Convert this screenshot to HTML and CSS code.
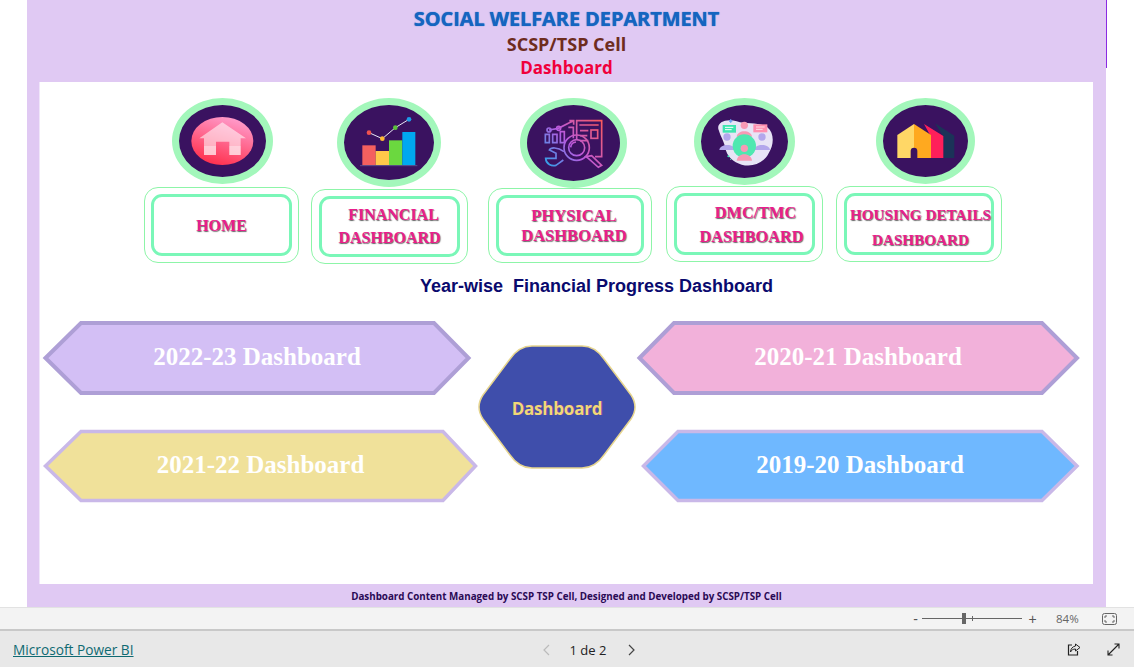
FILE: index.html
```html
<!DOCTYPE html>
<html lang="en">
<head>
    <meta charset="UTF-8">
    <meta name="viewport" content="width=device-width, initial-scale=1.0">
    <title>Social Welfare Department Dashboard</title>
    <link rel="stylesheet" href="styles.css">
</head>
<body>
    <div class="report">
        <header class="report-header">
            <div class="dept">SOCIAL WELFARE DEPARTMENT</div>
            <div class="cell">SCSP/TSP Cell</div>
            <div class="page-name">Dashboard</div>
        </header>

        <main class="canvas">
            <nav class="nav">
                <div class="nav-item nav-home">
                    <div class="icon">
                        <svg viewBox="117 45 261 216">
                            <defs>
                                <linearGradient id="homeGrad" x1="0.75" y1="0" x2="0.35" y2="1">
                                    <stop offset="0" stop-color="#ff9fd0"/>
                                    <stop offset="1" stop-color="#ff2f4c"/>
                                </linearGradient>
                            </defs>
                            <ellipse cx="247" cy="153" rx="93" ry="72" fill="url(#homeGrad)"/>
                            <path d="M247 97L318 145H302V195H268V155H228V195H192V145H178Z" fill="#fff" opacity="0.55"/>
                            <path d="M192 168H228V195H192ZM268 168H302V195H268Z" fill="#fff" opacity="0.35"/>
                        </svg>
                    </div>
                    <a class="nav-btn"><span class="nav-label">HOME</span></a>
                </div>
                <div class="nav-item nav-fin">
                    <div class="icon">
                        <svg viewBox="612 45 270 225">
                            <rect x="667" y="166" width="40" height="60" fill="#f4605f"/>
                            <rect x="707" y="183" width="40" height="43" fill="#ffc84a"/>
                            <rect x="747" y="151" width="40" height="75" fill="#6bd83f"/>
                            <rect x="787" y="126" width="39" height="100" fill="#00a8f0"/>
                            <path d="M660 227H832" stroke="#5a4f8c" stroke-width="3"/>
                            <path d="M687 128L727 146L766 113L807 88" fill="none" stroke="#e8e8f4" stroke-width="3"/>
                            <circle cx="687" cy="128" r="7" fill="#f0524f"/>
                            <circle cx="727" cy="146" r="7" fill="#ffb833"/>
                            <circle cx="766" cy="113" r="7" fill="#5cc23a"/>
                            <circle cx="807" cy="88" r="7" fill="#1c9be8"/>
                        </svg>
                    </div>
                    <a class="nav-btn"><span class="nav-label">&nbsp;&nbsp;FINANCIAL<br>DASHBOARD</span></a>
                </div>
                <div class="nav-item nav-phys">
                    <div class="icon">
                        <svg viewBox="141 45 279 228">
                            <defs>
                                <linearGradient id="physGrad" gradientUnits="userSpaceOnUse" x1="370" y1="90" x2="195" y2="232">
                                    <stop offset="0" stop-color="#ff5a55"/>
                                    <stop offset="0.55" stop-color="#b85ae0"/>
                                    <stop offset="1" stop-color="#25a8e8"/>
                                </linearGradient>
                            </defs>
                            <g fill="none" stroke="url(#physGrad)" stroke-width="5">
                                <path d="M207 120L235 115L268 98L280 93M268 92H281V104"/>
                                <circle cx="207" cy="120" r="6"/>
                                <circle cx="236" cy="115" r="6"/>
                                <path d="M196 133H208V158H196ZM218 133H231V158H218ZM241 125H253V158H241ZM265 112H280V145"/>
                                <path d="M290 150V92H365V200H345"/>
                                <path d="M298 105H356M300 122H325M300 137H322M300 152H325"/>
                                <rect x="333" y="120" width="20" height="25"/>
                                <circle cx="290" cy="173" r="38"/>
                                <circle cx="290" cy="173" r="24"/>
                                <path d="M272 172A18 18 0 0 1 288 156"/>
                                <path d="M318 200L335 197L365 226L355 232L325 205Z"/>
                                <path d="M252 185C232 170 212 172 208 180L228 190V205H197C198 222 215 230 228 226L250 210"/>
                            </g>
                        </svg>
                    </div>
                    <a class="nav-btn"><span class="nav-label">PHYSICAL<br>DASHBOARD</span></a>
                </div>
                <div class="nav-item nav-dmc">
                    <div class="icon">
                        <svg viewBox="663 45 261 219">
                            <path d="M716 120C708 100 735 84 770 94C800 104 840 96 862 112C884 130 882 165 866 190C850 222 815 232 785 224C760 216 740 200 735 170C730 150 722 140 716 120Z" fill="#e8e4f6"/>
                            <circle cx="741" cy="141" r="11" fill="#b3a7ec"/>
                            <path d="M718 180C720 160 764 160 766 180Z" fill="#b3a7ec"/>
                            <circle cx="846" cy="141" r="11" fill="#b3a7ec"/>
                            <path d="M822 180C824 160 868 160 870 180Z" fill="#b3a7ec"/>
                            <circle cx="793" cy="106" r="11" fill="#f79ab5"/>
                            <path d="M770 140C772 118 814 118 816 140Z" fill="#f79ab5"/>
                            <circle cx="793" cy="168" r="35" fill="#4fe8b0"/>
                            <circle cx="793" cy="175" r="11" fill="#f79ab5"/>
                            <path d="M770 212C772 186 814 186 816 212Z" fill="#f79ab5"/>
                            <rect x="728" y="105" width="40" height="23" fill="#3fe6b0"/>
                            <path d="M735 112H760M735 119H755" stroke="#fff" stroke-width="3"/>
                            <rect x="820" y="103" width="42" height="24" fill="#ff8fb0"/>
                            <path d="M828 111H854M828 118H848" stroke="#ffe0e8" stroke-width="3"/>
                            <path d="M752 88V98M747 93H757" stroke="#6a9cf0" stroke-width="4"/>
                            <circle cx="745" cy="199" r="3" fill="#3fe6b0"/>
                            <circle cx="752" cy="208" r="2" fill="#3fe6b0"/>
                        </svg>
                    </div>
                    <a class="nav-btn"><span class="nav-label">&nbsp;&nbsp;DMC/TMC<br>DASHBOARD</span></a>
                </div>
                <div class="nav-item nav-housing">
                    <div class="icon">
                        <svg viewBox="189 45 255 216">
                            <path d="M345 100L403 137V204H370V140Z" fill="#1b3358"/>
                            <path d="M312 102L370 138V204H330V135Z" fill="#ff1f5a"/>
                            <path d="M232 135L282 102V204H232Z" fill="#ffd766"/>
                            <path d="M282 102L333 135V204H282Z" fill="#ffa91f"/>
                            <path d="M272 204V183A10 10 0 0 1 292 183V204Z" fill="#3a1260"/>
                        </svg>
                    </div>
                    <a class="nav-btn"><span class="nav-label">HOUSING DETAILS<br>DASHBOARD</span></a>
                </div>
            </nav>

            <h2 class="section-title">Year-wise  Financial Progress Dashboard</h2>

            <section class="years">
                <a class="arrow arrow-2223">
                    <svg viewBox="0 0 428 74"><polygon points="2.500,37 38,2 391,2 425.500,37 391,72 38,72"/></svg>
                    <span>2022-23 Dashboard</span>
                </a>
                <a class="hex">
                    <svg viewBox="0 0 158 124"><path d="M5 50L32 14Q41 1 54 1H104Q117 1 126 14L153 50Q161 62 153 74L126 110Q117 123 104 123H54Q41 123 32 110L5 74Q-3 62 5 50Z"/></svg>
                    <span>Dashboard</span>
                </a>
                <a class="arrow arrow-2021">
                    <svg viewBox="0 0 444 74"><polygon points="3.500,37 38,2 406,2 441,37 406,72 38,72"/></svg>
                    <span>2020-21 Dashboard</span>
                </a>
                <a class="arrow arrow-2122">
                    <svg viewBox="0 0 435 72"><polygon points="2.500,36 38,1.500 400,1.500 432.500,36 400,70.500 38,70.500"/></svg>
                    <span>2021-22 Dashboard</span>
                </a>
                <a class="arrow arrow-1920">
                    <svg viewBox="0 0 440 72"><polygon points="3.500,36 38,1.500 402,1.500 437,36 402,70.500 38,70.500"/></svg>
                    <span>2019-20 Dashboard</span>
                </a>
            </section>
        </main>

        <footer class="report-footer">Dashboard Content Managed by SCSP TSP Cell, Designed and Developed by SCSP/TSP Cell</footer>
    </div>

    <div class="zoom-bar">
        <span class="zoom-sign">-</span>
        <div class="zoom-track"><div class="zoom-tick"></div><div class="zoom-handle"></div></div>
        <span class="zoom-sign">+</span>
        <span class="zoom-value">84%</span>
        <svg class="fit-icon" width="15" height="12" viewBox="0 0 15 12">
            <rect x="0.5" y="0.5" width="14" height="11" rx="2" fill="none" stroke="#666"/>
            <path d="M3 5V3H5M10 3H12V5M12 7V9H10M5 9H3V7" fill="none" stroke="#666"/>
        </svg>
    </div>

    <div class="page-bar">
        <a class="pbi-link">Microsoft Power BI</a>
        <div class="pager">
            <svg width="9" height="12" viewBox="0 0 9 12"><path d="M7 1L2 6L7 11" fill="none" stroke="#bbb" stroke-width="1.2"/></svg>
            <span class="pager-text">1 de 2</span>
            <svg width="9" height="12" viewBox="0 0 9 12"><path d="M2 1L7 6L2 11" fill="none" stroke="#444" stroke-width="1.2"/></svg>
        </div>
        <div class="bar-actions">
            <svg width="14" height="13" viewBox="0 0 14 13">
                <path d="M5 2H1.500V12H10.500V8" fill="none" stroke="#222" stroke-width="1.2"/>
                <path d="M8.500 1L13 4.500L8.500 8V6C6 6 4.500 7 3.500 9C3.500 6 5.500 3.500 8.500 3Z" fill="none" stroke="#222"/>
            </svg>
            <svg width="13" height="13" viewBox="0 0 13 13">
                <path d="M1 12L12 1M7.500 1H12V5.500M1 7.500V12H5.500" fill="none" stroke="#222" stroke-width="1.100"/>
            </svg>
        </div>
    </div>
</body>
</html>
```

FILE: styles.css
```css
* {
    box-sizing: border-box;
}
body {
    margin: 0;
    height: 667px;
    overflow: hidden;
    background: #fff;
    display: flex;
    flex-direction: column;
    font-family: "Liberation Sans", Arial, sans-serif;
}
.report {
    position: relative;
    height: 607px;
    width: 1079px;
    margin-left: 27px;
    background: #e0c9f3;
    display: flex;
    flex-direction: column;
}
/* thin purple edge on the right of the header */
.report::after {
    content: "";
    position: absolute;
    top: 0;
    left: 100%;
    width: 1px;
    height: 68px;
    background: #8a2be2;
}
.report-header {
    height: 82px;
    padding-top: 6px;
    text-align: center;
    font-family: "Open Sans", sans-serif;
    font-weight: 700;
}
.dept {
    font-size: 20px;
    line-height: 26px;
    letter-spacing: -0.1px;
    color: #1565c0;
    text-shadow: 0 0 1px #1565c0;
}
.cell {
    font-size: 18px;
    line-height: 24px;
    color: #6e2c1e;
}
.page-name {
    font-size: 17px;
    line-height: 24px;
    color: #f0003c;
}
.canvas {
    flex: 1;
    margin: 0 13px 0 12px;
    background: #fff;
    border-left: 1px solid #f0e6fa;
    display: flex;
    flex-direction: column;
}
.nav {
    display: flex;
    height: 182px;
    padding: 16px 0 0 104px;
}
.nav-item {
    display: flex;
    flex-direction: column;
    align-items: center;
}
.icon {
    border: 7px solid #a3f7bb;
    border-radius: 50%;
    background: #3a1260;
    overflow: hidden;
}
.icon svg {
    display: block;
    width: 100%;
    height: 100%;
}
.nav-btn {
    display: flex;
    padding: 6px 7px;
    border: 1px solid #8df5a8;
    border-radius: 14px;
}
.nav-label {
    flex: 1;
    min-width: 0;
    display: flex;
    align-items: center;
    justify-content: center;
    text-align: center;
    border: 3px solid #7af7b8;
    border-radius: 11px;
    font-family: "Liberation Serif", serif;
    font-weight: 700;
    font-size: 16px;
    line-height: 23px;
    color: #e91e8c;
    text-shadow: 0.7px 0.7px 1px #666;
    white-space: nowrap;
}
.nav-home { margin-right: 12px; }
.nav-home .icon { width: 101px; height: 86px; margin-left: 2px; }
.nav-home .nav-btn { width: 155px; height: 76px; margin-top: 3px; padding: 6px; }
.nav-fin { margin-right: 20px; }
.nav-fin .icon { width: 104px; height: 89px; margin-left: -2px; }
.nav-fin .nav-btn { width: 157px; height: 75px; margin-top: 2px; }
.nav-fin .nav-label { padding-bottom: 2px; }
.nav-phys { margin-right: 14px; }
.nav-phys .icon { width: 107px; height: 90px; margin-left: 7px; }
.nav-phys .nav-btn { width: 164px; height: 75px; }
.nav-phys .nav-label { padding-left: 8px; font-size: 16.500px; line-height: 20px; }
.nav-dmc { margin-right: 13px; }
.nav-dmc .icon { width: 101px; height: 87px; }
.nav-dmc .nav-btn { width: 157px; height: 76px; margin-top: 1px; }
.nav-dmc .nav-label { padding: 2px 0 0 14px; font-size: 16.300px; line-height: 24px; }
.nav-housing .icon { width: 99px; height: 86px; margin-left: 13px; }
.nav-housing .nav-btn { width: 166px; height: 76px; margin-top: 2px; }
.nav-housing .nav-label { padding: 5px 0 0 3px; font-size: 15.200px; line-height: 25px; }
.section-title {
    margin: 12px 0 0;
    padding-left: 60px;
    text-align: center;
    white-space: pre;
    font-size: 18px;
    line-height: 21px;
    font-weight: 700;
    color: #0a0a6e;
}
.years {
    display: grid;
    grid-template-columns: 435px 158px 444px;
    grid-template-rows: 74px 72px;
    row-gap: 35px;
    margin-top: 24px;
    padding-left: 3px;
}
.arrow,
.hex {
    position: relative;
    display: flex;
    align-items: center;
    justify-content: center;
}
.arrow {
    padding-bottom: 2px;
}
.arrow svg,
.hex svg {
    position: absolute;
    top: 0;
    left: 0;
    width: 100%;
    height: 100%;
    overflow: visible;
}
.arrow span {
    position: relative;
    font-family: "Liberation Serif", serif;
    font-weight: 700;
    font-size: 25px;
    color: #fff;
}
.arrow-2223 { width: 428px; grid-column: 1; grid-row: 1; }
.arrow-2223 polygon { fill: #d3bff5; stroke: #ae9fd6; stroke-width: 4; }
.arrow-2122 { grid-column: 1; grid-row: 2; }
.arrow-2122 polygon { fill: #f0e19a; stroke: #c9b8e8; stroke-width: 3.500; }
.arrow-2021 { grid-column: 3; grid-row: 1; }
.arrow-2021 polygon { fill: #f2b1da; stroke: #ae9fd6; stroke-width: 4; }
.arrow-1920 { width: 440px; justify-self: end; grid-column: 3; grid-row: 2; }
.arrow-1920 polygon { fill: #6fb8ff; stroke: #c9b8e8; stroke-width: 3.500; }
.hex {
    grid-column: 2;
    grid-row: 1 / 3;
    height: 124px;
    margin-top: 24px;
    padding-top: 2px;
}
.hex path {
    fill: #3f4eab;
    stroke: #e6d58f;
    stroke-width: 1.500;
}
.hex span {
    position: relative;
    font-family: "Open Sans", sans-serif;
    font-weight: 700;
    font-size: 17px;
    letter-spacing: -0.2px;
    color: #f0d878;
    text-shadow: 1px 0 0 rgba(233, 30, 140, 0.3);
}
.report-footer {
    height: 23px;
    margin-left: 13px;
    padding: 1px 13px 0 0;
    line-height: 24px;
    text-align: center;
    font-family: "Open Sans", sans-serif;
    font-weight: 700;
    font-size: 9.800px;
    color: #2a0a55;
}
.zoom-bar {
    height: 24px;
    background: #f3f3f3;
    border-top: 1px solid #e2e2e2;
    border-bottom: 2px solid #c8c8c8;
    display: flex;
    align-items: center;
    padding-left: 911px;
    color: #555;
}
.zoom-sign {
    font-size: 14px;
    width: 9px;
    text-align: center;
}
.zoom-track {
    position: relative;
    width: 100px;
    height: 1px;
    margin: 0 6px 0 2px;
    background: #666;
}
.zoom-tick {
    position: absolute;
    left: 50px;
    top: -2px;
    width: 1px;
    height: 5px;
    background: #666;
}
.zoom-handle {
    position: absolute;
    left: 40px;
    top: -5px;
    width: 4px;
    height: 11px;
    background: #666;
}
.zoom-value {
    margin-left: 19px;
    font-family: "Open Sans", sans-serif;
    font-size: 11.500px;
    color: #666;
}
.fit-icon {
    margin-left: 23px;
}
.page-bar {
    flex: 1;
    position: relative;
    background: #e8e8e8;
    display: flex;
    align-items: center;
    padding: 1px 0 0 13px;
}
.pbi-link {
    font-family: "Open Sans", sans-serif;
    font-size: 13.700px;
    color: #0f6a72;
    text-decoration: underline;
}
.pager {
    display: flex;
    align-items: center;
    margin-left: 408px;
}
.pager-text {
    margin: 0 21px 0 19px;
    font-family: "Open Sans", sans-serif;
    font-size: 13px;
    color: #222;
}
.bar-actions {
    display: flex;
    align-items: center;
    gap: 26px;
    margin-left: auto;
    padding-right: 14px;
}
```
